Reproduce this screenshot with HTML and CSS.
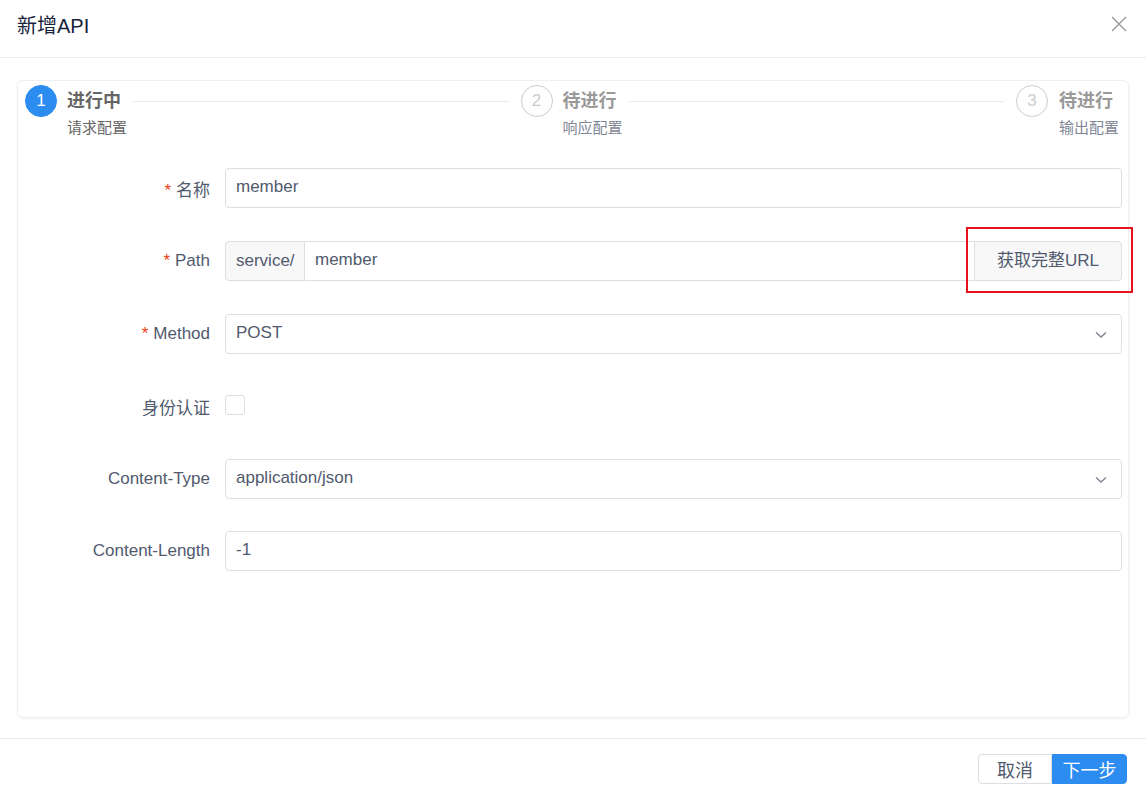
FILE: index.html
```html
<!DOCTYPE html>
<html lang="zh-CN">
<head>
  <meta charset="UTF-8">
  <title>新增API</title>
  <link rel="stylesheet" href="styles.css">
</head>
<body>
  <div class="modal">
    <div class="modal-header">
      <span class="modal-title">新增API</span>
      <svg class="close" width="16" height="16" viewBox="0 0 16 16">
        <path d="M1 1 L15 15 M15 1 L1 15" stroke="#999" stroke-width="1.4" fill="none"/>
      </svg>
    </div>

    <div class="modal-body">
      <div class="card">
        <div class="steps">
          <div class="step active">
            <div class="step-head">1</div>
            <div class="step-main">
              <div class="step-title"><span>进行中</span><i class="step-line"></i></div>
              <div class="step-desc">请求配置</div>
            </div>
          </div>
          <div class="step">
            <div class="step-head">2</div>
            <div class="step-main">
              <div class="step-title"><span>待进行</span><i class="step-line"></i></div>
              <div class="step-desc">响应配置</div>
            </div>
          </div>
          <div class="step last">
            <div class="step-head">3</div>
            <div class="step-main">
              <div class="step-title"><span>待进行</span></div>
              <div class="step-desc">输出配置</div>
            </div>
          </div>
        </div>

        <form class="form">
          <div class="form-row">
            <label class="form-label"><em>*</em>名称</label>
            <div class="input">member</div>
          </div>
          <div class="form-row">
            <label class="form-label"><em>*</em>Path</label>
            <div class="input-group">
              <span class="addon">service/</span>
              <div class="input grouped">member</div>
              <span class="addon append">获取完整URL</span>
            </div>
          </div>
          <div class="form-row">
            <label class="form-label"><em>*</em>Method</label>
            <div class="input select">POST
              <svg class="arrow" width="12" height="8" viewBox="0 0 12 8"><path d="M1 1.5 L6 6 L11 1.5" stroke="#808695" stroke-width="1.5" fill="none"/></svg>
            </div>
          </div>
          <div class="form-row short">
            <label class="form-label">身份认证</label>
            <span class="checkbox"></span>
          </div>
          <div class="form-row tight">
            <label class="form-label">Content-Type</label>
            <div class="input select">application/json
              <svg class="arrow" width="12" height="8" viewBox="0 0 12 8"><path d="M1 1.5 L6 6 L11 1.5" stroke="#808695" stroke-width="1.5" fill="none"/></svg>
            </div>
          </div>
          <div class="form-row">
            <label class="form-label">Content-Length</label>
            <div class="input">-1</div>
          </div>
        </form>
      </div>
    </div>

    <div class="modal-footer">
      <div class="btn-group">
        <button class="btn">取消</button>
        <button class="btn btn-primary">下一步</button>
      </div>
    </div>
  </div>

  <div class="highlight"></div>
</body>
</html>
```

FILE: styles.css
```css
body {
  margin: 0;
  background: #fff;
  font-family: "Liberation Sans", "Noto Sans CJK SC", sans-serif;
  color: #515a6e;
}
.modal-header {
  height: 57px;
  border-bottom: 1px solid #e8eaec;
  display: flex;
  align-items: center;
  justify-content: space-between;
  padding: 0 19px 0 17px;
}
.modal-title {
  font-size: 20px;
  color: #17233d;
  margin-top: -9px;
}
.close {
  margin-top: -9px;
}
.modal-body {
  padding: 22px 17px 20px;
}
.card {
  height: 632px;
  border: 1px solid #f0f0f0;
  border-radius: 6px;
  box-shadow: 0 1px 3px rgba(0, 0, 0, 0.06);
  padding: 4px 6px 0 7px;
}
.steps {
  display: flex;
  height: 54px;
  padding-right: 3px;
}
.step {
  flex: 1;
  display: flex;
}
.step.last {
  flex: none;
}
.step-head {
  width: 30px;
  height: 30px;
  border: 1px solid #ccc;
  border-radius: 50%;
  color: #ccc;
  font-size: 17px;
  line-height: 30px;
  text-align: center;
  flex: none;
}
.step.active .step-head {
  background: #2d8cf0;
  border-color: #2d8cf0;
  color: #fff;
}
.step-main {
  flex: 1;
  margin-left: 10px;
}
.step.last .step-main {
  margin-left: 11px;
}
.step-title {
  display: flex;
  align-items: center;
  height: 28px;
  font-size: 18px;
  font-weight: bold;
  color: #999;
}
.step.active .step-title {
  color: #666;
}
.step-line {
  flex: 1;
  height: 1px;
  background: #e8eaec;
  margin: 4px 12px 0;
}
.step-desc {
  margin-top: 4px;
  font-size: 15px;
  line-height: 22px;
  color: #808695;
}
.step.active .step-desc {
  color: #666;
}
.form {
  margin-top: 29px;
}
.form-row {
  display: flex;
  align-items: center;
  height: 40px;
  margin-bottom: 33px;
}
.form-row.short {
  height: 39px;
  margin-bottom: 33px;
}
.form-row.tight {
  margin-bottom: 32px;
}
.form-label {
  width: 185px;
  padding-right: 15px;
  text-align: right;
  font-size: 17px;
  flex: none;
}
.form-label em {
  font-style: normal;
  color: #ed4014;
  margin-right: 5px;
}
.input {
  flex: 1;
  height: 38px;
  border: 1px solid #dcdee2;
  border-radius: 4px;
  padding: 0 10px;
  font-size: 17px;
  line-height: 36px;
  color: #515a6e;
  position: relative;
}
.select .arrow {
  position: absolute;
  right: 14px;
  top: 16px;
}
.input-group {
  flex: 1;
  display: flex;
  height: 40px;
}
.input.grouped {
  border-radius: 0;
  border-left: none;
  border-right: none;
}
.addon {
  background: #f8f8f9;
  border: 1px solid #dcdee2;
  border-radius: 4px 0 0 4px;
  width: 80px;
  padding-left: 10px;
  box-sizing: border-box;
  font-size: 17px;
  line-height: 38px;
  flex: none;
}
.addon.append {
  border-radius: 0 4px 4px 0;
  width: 148px;
  padding: 0;
  text-align: center;
}
.checkbox {
  width: 18px;
  height: 18px;
  border: 1px solid #dcdee2;
  border-radius: 3px;
  margin-top: -3px;
}
.modal-footer {
  border-top: 1px solid #e8eaec;
  padding: 15px 19px 0;
  display: flex;
  justify-content: flex-end;
}
.btn-group {
  display: flex;
}
.btn {
  height: 30px;
  width: 74px;
  font-family: inherit;
  font-size: 18px;
  color: #515a6e;
  background: #fff;
  border: 1px solid #dcdee2;
  border-radius: 4px 0 0 4px;
  padding: 0;
  cursor: pointer;
}
.btn-primary {
  width: 75px;
  background: #2d8cf0;
  border-color: #2d8cf0;
  color: #fff;
  border-radius: 0 4px 4px 0;
}
.highlight {
  position: absolute;
  left: 966px;
  top: 227px;
  width: 163px;
  height: 62px;
  border: 2px solid #e5111d;
}
```
